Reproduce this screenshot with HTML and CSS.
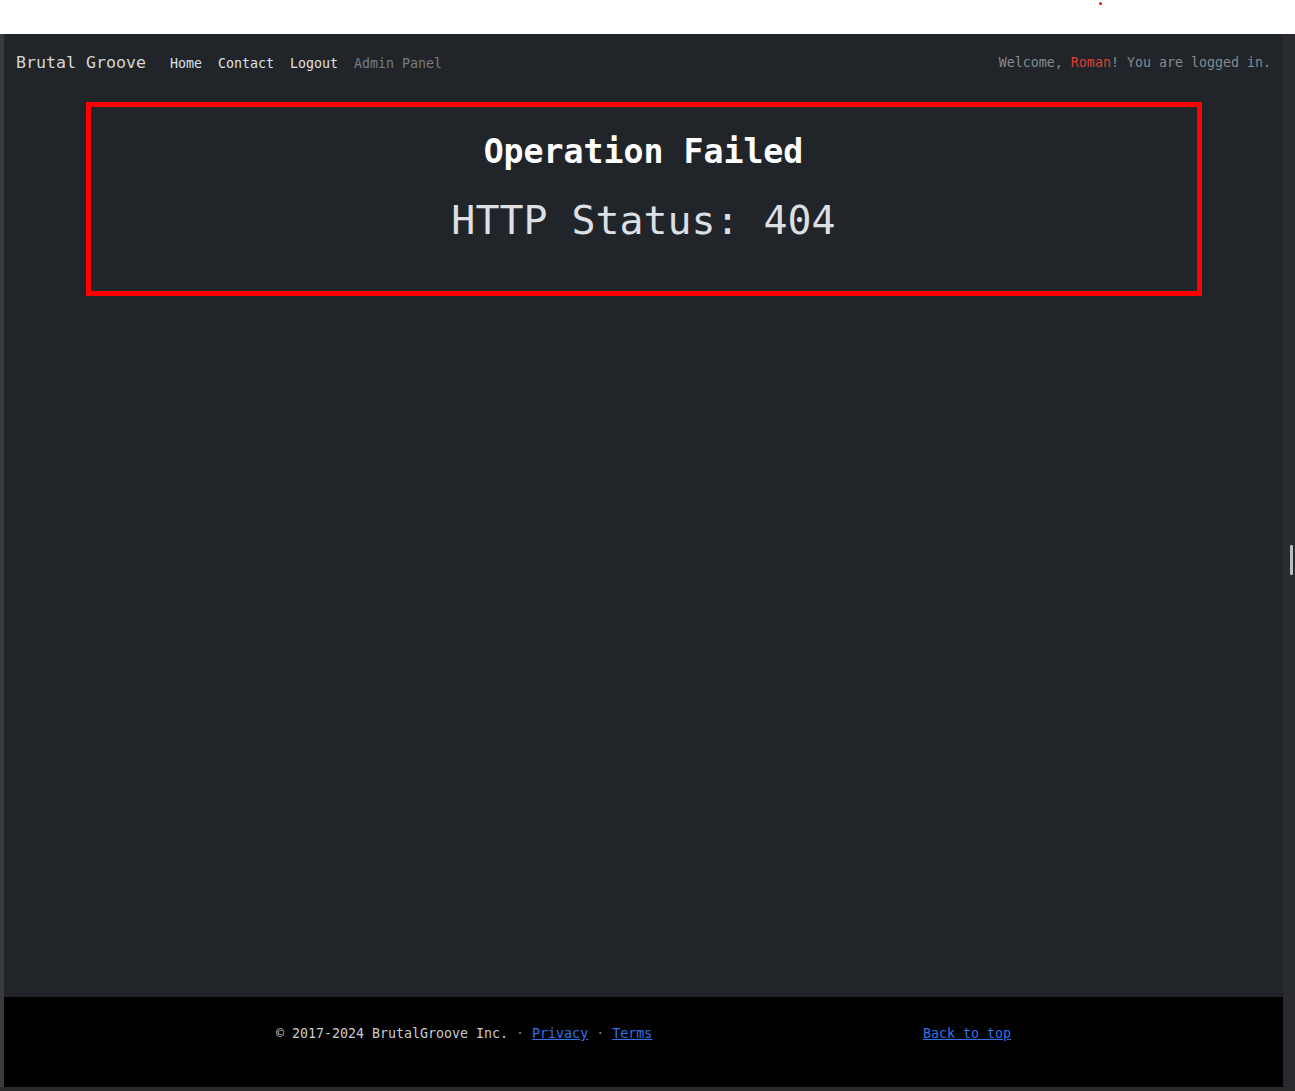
FILE: index.html
```html
<!DOCTYPE html>
<html lang="en">
<head>
<meta charset="utf-8">
<title>Brutal Groove - Operation Failed</title>
<link rel="stylesheet" href="styles.css">
</head>
<body>
<div class="topbar"><span class="dot"></span></div>
<div class="frame">
  <div class="page">
    <nav class="navbar">
      <div class="nav-left">
        <a class="brand" href="#">Brutal Groove</a>
        <ul class="nav-links">
          <li><a class="nav-link home" href="#">Home</a></li>
          <li><a class="nav-link" href="#">Contact</a></li>
          <li><a class="nav-link logout" href="#">Logout</a></li>
          <li><a class="nav-link disabled" href="#">Admin Panel</a></li>
        </ul>
      </div>
      <div class="welcome">Welcome, <span class="user">Roman</span>! You are logged in.</div>
    </nav>
    <main class="main">
      <section class="error-box">
        <h1 class="error-title">Operation Failed</h1>
        <p class="error-status">HTTP Status: 404</p>
      </section>
    </main>
    <footer class="footer">
      <div class="footer-inner">
        <p class="copy">© 2017-2024 BrutalGroove Inc. <span class="sep">·</span> <a href="#">Privacy</a> <span class="sep">·</span> <a href="#">Terms</a></p>
        <p class="back"><a href="#">Back to top</a></p>
      </div>
    </footer>
  </div>
  <div class="track"><span class="thumb"></span></div>
</div>
<div class="bottom-strip"></div>
</body>
</html>
```
FILE: styles.css
```css
* { box-sizing: border-box; }
html, body { margin: 0; padding: 0; }
body {
  background: #ffffff;
  font-family: "DejaVu Sans Mono", "Liberation Mono", monospace;
  width: 1295px;
  height: 1091px;
  overflow: hidden;
}
.topbar {
  height: 34px;
  display: flex;
  align-items: flex-start;
}
.dot {
  width: 3px;
  height: 3px;
  background: #e8141c;
  border-radius: 50%;
  margin-left: 1099px;
  margin-top: 2px;
}
.frame {
  display: flex;
  height: 1053px;
  border-left: 4px solid #3b3b3c;
}
.page {
  flex: 1;
  display: flex;
  flex-direction: column;
  background: #212529;
}
.track {
  width: 12px;
  background: #2a2b2e;
  display: flex;
  flex-direction: column;
}
.thumb {
  width: 3px;
  height: 30px;
  margin-top: 511px;
  margin-left: 7px;
  background: #b9babc;
  border-radius: 1px;
}
.bottom-strip {
  height: 4px;
  background: #2c2c2e;
}
.navbar {
  height: 56px;
  padding: 0 12px;
  display: flex;
  align-items: center;
  justify-content: space-between;
}
.nav-left {
  display: flex;
  align-items: center;
}
.brand {
  font-size: 16.6px;
  color: #d6d6d6;
  text-decoration: none;
  margin-right: 24px;
}
.nav-links {
  list-style: none;
  margin: 0;
  padding: 0;
  display: flex;
  gap: 16px;
}
.nav-link {
  font-size: 13.3px;
  color: #dde2e8;
  text-decoration: none;
}
.nav-link.home { color: #d9e0ea; }
.nav-link.logout { color: #e2e2e2; }
.nav-link.disabled { color: #767c82; }
.welcome {
  font-size: 13.3px;
  color: #858a90;
}
.user { color: #dd3f35; }
.main {
  flex: 1;
  padding-top: 12px;
}
.error-box {
  width: 1116px;
  height: 194px;
  margin: 0 auto;
  border: 5px solid #ff0000;
  padding-top: 25px;
  text-align: center;
}
.error-title {
  margin: 0;
  font-size: 33.2px;
  line-height: 40px;
  font-weight: bold;
  color: #ffffff;
}
.error-status {
  margin: 24px 0 0;
  font-size: 39.9px;
  line-height: 48px;
  font-weight: 300;
  color: #dcdfe3;
}
.footer {
  height: 90px;
  background: #000000;
  padding-top: 27px;
}
.footer-inner {
  width: 1006px;
  margin: 0 auto;
  display: flex;
  justify-content: space-around;
}
.footer-inner p {
  margin: 0;
  font-size: 13.3px;
  line-height: 20px;
  color: #c8ccd0;
}
.sep { color: #7d8287; }
.footer-inner a {
  color: #3173e6;
  text-decoration: underline;
}
```
